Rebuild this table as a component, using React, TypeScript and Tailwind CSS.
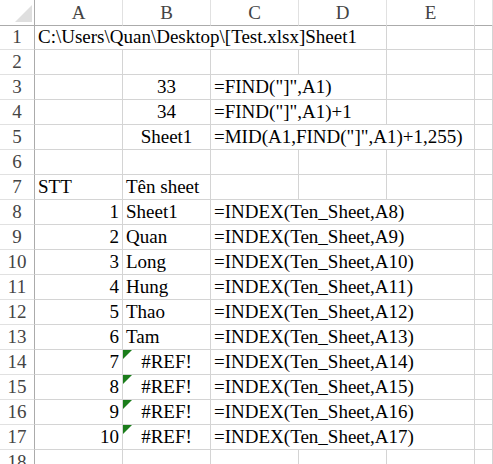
import React from 'react';

type Cell = {
  text?: string;
  span?: number;
  align?: 'left' | 'center' | 'right';
  flag?: boolean;
};

const cols = ['A', 'B', 'C', 'D', 'E', ''];

const blank = (n: number): Cell[] => Array.from({ length: n }, () => ({}));

const names = ['Sheet1', 'Quan', 'Long', 'Hung', 'Thao', 'Tam'];

const rows: Cell[][] = [
  [{ text: 'C:\\Users\\Quan\\Desktop\\[Test.xlsx]Sheet1', span: 4 }, {}, {}],
  blank(6),
  [{}, { text: '33', align: 'center' }, { text: '=FIND("]",A1)', span: 2 }, {}, {}],
  [{}, { text: '34', align: 'center' }, { text: '=FIND("]",A1)+1', span: 2 }, {}, {}],
  [{}, { text: 'Sheet1', align: 'center' }, { text: '=MID(A1,FIND("]",A1)+1,255)', span: 3 }, {}],
  blank(6),
  [{ text: 'STT' }, { text: 'Tên sheet' }, {}, {}, {}, {}],
  ...Array.from({ length: 10 }, (_, i): Cell[] => [
    { text: String(i + 1), align: 'right' },
    i < 6 ? { text: names[i] } : { text: '#REF!', align: 'center', flag: true },
    { text: `=INDEX(Ten_Sheet,A${i + 8})`, span: 3 },
    {},
  ]),
  blank(6),
];

const spanClass: Record<number, string> = {
  1: 'col-span-1',
  2: 'col-span-2',
  3: 'col-span-3',
  4: 'col-span-4',
};

const alignClass = {
  left: 'justify-start pl-[3px]',
  center: 'justify-center',
  right: 'justify-end pr-[3px]',
};

export default function App() {
  return (
    <div className="w-[493px] h-[464px] overflow-hidden bg-white text-black">
      <div className="grid grid-cols-[35px_repeat(5,88px)_1fr] auto-rows-[25px]">
        {/* header row */}
        <div className="relative h-[26px] border-r border-b border-[#ababab]">
          <div className="absolute right-[2px] bottom-[3px] w-[17px] h-[17px] bg-[#dfdfdf] [clip-path:polygon(100%_0,100%_100%,0_100%)]" />
        </div>
        {cols.map((c, i) => (
          <div
            key={i}
            className="h-[26px] flex items-center justify-center border-b border-b-[#ababab] border-r border-r-[#e1e1e1]"
          >
            <span className="font-['Liberation_Serif'] text-[19px] leading-[22px] text-[#444]">{c}</span>
          </div>
        ))}

        {rows.map((row, r) => (
          <React.Fragment key={r}>
            <div className="flex items-end justify-center border-r border-r-[#ababab] border-b border-b-[#e1e1e1] pb-px">
              <span className="font-['Liberation_Serif'] text-[19px] leading-[22px] text-[#444]">{r + 1}</span>
            </div>
            {row.map((cell, c) => (
              <div
                key={c}
                className={`relative flex items-end whitespace-nowrap pb-px border-r border-b border-[#d4d4d4] ${spanClass[cell.span ?? 1]} ${alignClass[cell.align ?? 'left']}`}
              >
                {cell.flag && (
                  <div className="absolute left-0 top-0 w-[9px] h-[9px] bg-[#1b7d1b] [clip-path:polygon(0_0,100%_0,0_100%)]" />
                )}
                <span className="font-['Liberation_Serif'] text-[19px] leading-[22px]">{cell.text}</span>
              </div>
            ))}
          </React.Fragment>
        ))}
      </div>
    </div>
  );
}
